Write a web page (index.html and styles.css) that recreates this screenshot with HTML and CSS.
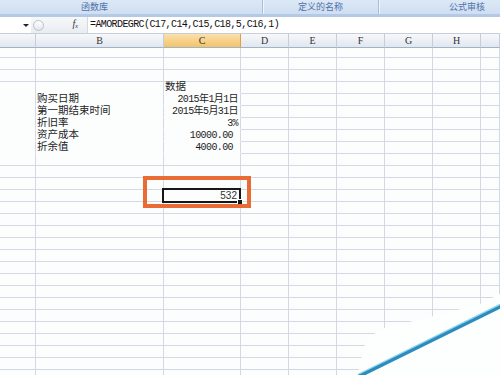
FILE: index.html
```html
<!DOCTYPE html>
<html lang="zh">
<head>
  <meta charset="UTF-8">
  <title>AMORDEGRC 函数</title>
  <link rel="stylesheet" href="styles.css">
</head>
<body>
  <!-- 功能区分组标题 -->
  <div class="ribbon">
    <div class="group g1">函数库</div>
    <div class="group g2">定义的名称</div>
    <div class="group g3">公式审核</div>
  </div>

  <!-- 编辑栏 -->
  <div class="formula-bar">
    <div class="name-box"><span class="drop"></span></div>
    <div class="fx-box"><span class="grip"></span><span class="fx">f<sub>x</sub></span></div>
    <div class="formula">=AMORDEGRC(C17,C14,C15,C18,5,C16,1)</div>
  </div>

  <!-- 工作表 -->
  <table class="sheet">
    <colgroup>
      <col class="c-a"><col class="c-b"><col class="c-c">
      <col class="c-n"><col class="c-n"><col class="c-n"><col class="c-n"><col class="c-n">
      <col class="c-end">
    </colgroup>
    <thead>
      <tr><th></th><th>B</th><th class="active">C</th><th>D</th><th>E</th><th>F</th><th>G</th><th>H</th><th></th></tr>
    </thead>
    <tbody id="sheet-body">
      <tr class="first"><td></td><td></td><td></td><td></td><td></td><td></td><td></td><td></td><td></td></tr>
      <tr><td></td><td></td><td></td><td></td><td></td><td></td><td></td><td></td><td></td></tr>
      <tr><td></td><td></td><td></td><td></td><td></td><td></td><td></td><td></td><td></td></tr>
      <tr class="plain"><td></td><td></td><td class="head">数据</td><td></td><td></td><td></td><td></td><td></td><td></td></tr>
      <tr class="plain"><td></td><td class="label">购买日期</td><td class="val">2015年1月1日</td><td></td><td></td><td></td><td></td><td></td><td></td></tr>
      <tr class="plain"><td></td><td class="label">第一期结束时间</td><td class="val">2015年5月31日</td><td></td><td></td><td></td><td></td><td></td><td></td></tr>
      <tr class="plain"><td></td><td class="label">折旧率</td><td class="val">3%</td><td></td><td></td><td></td><td></td><td></td><td></td></tr>
      <tr class="plain"><td></td><td class="label">资产成本</td><td class="val acc">10000.00</td><td></td><td></td><td></td><td></td><td></td><td></td></tr>
      <tr class="plain"><td></td><td class="label">折余值</td><td class="val acc">4000.00</td><td></td><td></td><td></td><td></td><td></td><td></td></tr>
      <tr><td></td><td></td><td></td><td></td><td></td><td></td><td></td><td></td><td></td></tr>
      <tr><td></td><td></td><td></td><td></td><td></td><td></td><td></td><td></td><td></td></tr>
      <tr><td></td><td></td><td></td><td></td><td></td><td></td><td></td><td></td><td></td></tr>
      <tr><td></td><td></td><td class="sel"><span class="cursor"></span><span class="mark"></span>532</td><td></td><td></td><td></td><td></td><td></td><td></td></tr>
    </tbody>
  </table>

  <!-- 右下角翻页效果 -->
  <svg class="curl" width="145" height="85" viewBox="0 0 145 85">
    <polygon points="145,4 125,14 75,27 25,39 11,51 7,65 3,85 145,85" fill="#fdfefe"/>
    <line x1="4" y1="86" x2="146" y2="16" stroke="#2c8cbd" stroke-width="4"/>
    <line x1="4" y1="84" x2="146" y2="14" stroke="#8dd5ec" stroke-width="1.2"/>
  </svg>

  <script>
    // 补足下方的空行
    var body = document.getElementById('sheet-body');
    for (var i = 0; i < 15; i++) {
      var tr = document.createElement('tr');
      for (var j = 0; j < 9; j++) {
        tr.appendChild(document.createElement('td'));
      }
      body.appendChild(tr);
    }
  </script>
</body>
</html>
```

FILE: styles.css
```css
/* 页面基础 */
html, body {
  margin: 0;
  padding: 0;
  width: 500px;
  height: 375px;
  overflow: hidden;
  background: #fcfdfd;
  font-family: "Noto Sans CJK SC", sans-serif;
}
body {
  position: relative;
}

/* 功能区 */
.ribbon {
  display: flex;
  height: 14px;
  background: linear-gradient(#dce8f6, #cfdef1);
  border-bottom: 3px solid #b3c9e4;
}
.group {
  font-size: 9px;
  line-height: 14px;
  color: #4f72ab;
  text-align: center;
  box-sizing: border-box;
}
.g1 {
  width: 263px;
  padding-right: 73px;
  border-right: 1px solid #a8bfdc;
}
.g2 {
  width: 116px;
  border-right: 1px solid #a8bfdc;
  box-shadow: inset 1px 0 0 #eef4fb;
}
.g3 {
  flex: 1;
  padding-left: 55px;
  box-shadow: inset 1px 0 0 #eef4fb;
}

/* 编辑栏 */
.formula-bar {
  display: flex;
  height: 16px;
  background: #fff;
  border-bottom: 1px solid #c5ced9;
}
.name-box {
  width: 31px;
  position: relative;
}
.drop {
  position: absolute;
  left: 23px;
  top: 7px;
  border-left: 3px solid transparent;
  border-right: 3px solid transparent;
  border-top: 3px solid #222;
}
.fx-box {
  width: 56px;
  display: flex;
  align-items: center;
  background: linear-gradient(#f7f8fa, #e9ecf0);
  border-right: 1px solid #d4d9e0;
}
.grip {
  width: 11px;
  height: 11px;
  margin-left: 2px;
  border-radius: 50%;
  border: 1px solid #b9c1cb;
  background: linear-gradient(#ffffff, #e2e6eb);
  box-sizing: border-box;
}
.fx {
  margin-left: auto;
  margin-right: 9px;
  font-family: "Liberation Serif", serif;
  font-style: italic;
  font-size: 10px;
  color: #333;
  line-height: 10px;
}
.fx sub {
  font-size: 6px;
  vertical-align: -1px;
}
.formula {
  padding-left: 2px;
  font-family: "Liberation Mono", monospace;
  font-size: 10px;
  letter-spacing: -0.6px;
  line-height: 16px;
  color: #111;
}

/* 工作表 */
.sheet {
  width: 500px;
  table-layout: fixed;
  border-collapse: separate;
  border-spacing: 0;
}
.c-a { width: 36px; }
.c-b { width: 128px; }
.c-c { width: 77px; }
.c-n { width: 48px; }
.c-end { width: 19px; }
.sheet th {
  height: 14px;
  padding: 0;
  box-sizing: border-box;
  background: linear-gradient(#f6f8fb, #e2e7ee);
  border-right: 1px solid #c6ceda;
  border-bottom: 1px solid #9fb3cc;
  font-family: "Liberation Serif", serif;
  font-weight: normal;
  font-size: 10px;
  line-height: 13px;
  color: #333;
}
.sheet th.active {
  background: linear-gradient(#fae0ae, #f2c468);
  border-right-color: #d9a24a;
}
.sheet tr {
  height: 12px;
}
.sheet tr.first {
  height: 10px;
}
.sheet td {
  padding: 0;
  border-right: 1px solid #d3d9e4;
  border-bottom: 1px solid #d3d9e4;
  font-family: "Liberation Mono", "Noto Sans CJK SC", monospace;
  font-size: 10.5px;
  line-height: 11px;
  color: #1e1e1e;
  white-space: nowrap;
  overflow: visible;
}
.sheet tr.plain td:nth-child(-n+3) {
  border-bottom-color: #fcfdfd;
}
.label,
.head {
  padding-left: 1px !important;
}
.val {
  text-align: right;
  padding-right: 2px !important;
  font-size: 10px !important;
  letter-spacing: -0.6px;
}
.val.acc {
  padding-right: 7px !important;
}

/* 选中的单元格 */
.sel {
  position: relative;
  text-align: right;
  padding-right: 3px !important;
  font-family: "Liberation Sans", sans-serif !important;
  font-size: 10px !important;
  color: #333 !important;
}
.cursor {
  position: absolute;
  left: -2px;
  top: -2px;
  right: -1px;
  bottom: -2px;
  border: 2px solid #161616;
}
.cursor::after {
  content: "";
  position: absolute;
  right: -4px;
  bottom: -4px;
  width: 4px;
  height: 4px;
  background: #161616;
  border: 1px solid #fff;
}
.mark {
  position: absolute;
  left: -21px;
  top: -14px;
  width: 108px;
  height: 32px;
  box-sizing: border-box;
  border: 4px solid #e96c36;
}

/* 右下角翻页 */
.curl {
  position: absolute;
  left: 355px;
  top: 290px;
}
```
